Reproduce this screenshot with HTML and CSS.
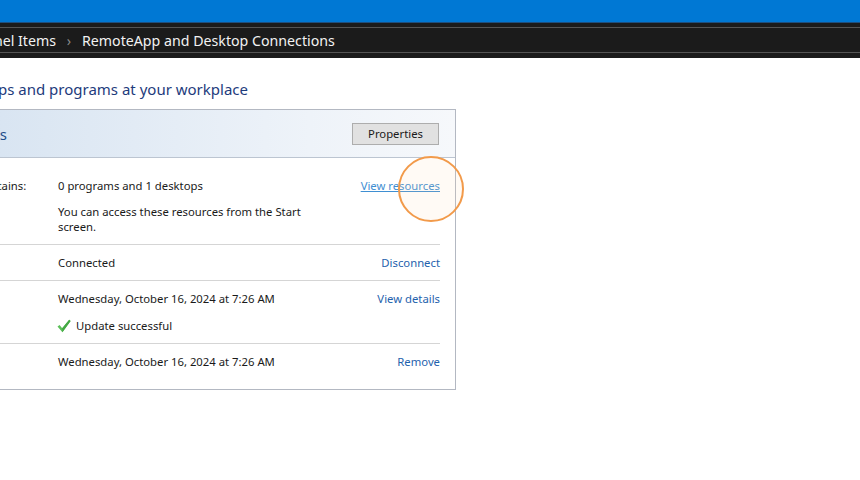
FILE: index.html
```html
<!DOCTYPE html>
<html lang="en">
<head>
    <meta charset="UTF-8">
    <meta name="viewport" content="width=device-width, initial-scale=1.0">
    <title>RemoteApp and Desktop Connections</title>
    <link rel="stylesheet" href="styles.css">
</head>
<body>
    <div class="titlebar"></div>
    <div class="navbar">
        <div class="crumbs">
            <span class="crumb clip"><span>All Control Panel Items</span></span>
            <span class="sep">&#8250;</span>
            <span class="crumb">RemoteApp and Desktop Connections</span>
        </div>
    </div>

    <main class="content">
        <h1 class="heading clip"><span>Access RemoteApp and desktops and programs at your workplace</span></h1>

        <section class="card">
            <div class="card-head">
                <h2 class="card-title clip"><span>Work Resources</span></h2>
                <button class="btn">Properties</button>
            </div>
            <div class="card-body">
                <div class="row">
                    <div class="label">This connection contains:</div>
                    <div class="value">
                        <p>0 programs and 1 desktops</p>
                        <p class="note">You can access these resources from the Start screen.</p>
                    </div>
                    <a class="link hover" href="#">View resources</a>
                </div>
                <div class="row">
                    <div class="label">Status:</div>
                    <div class="value"><p>Connected</p></div>
                    <a class="link" href="#">Disconnect</a>
                </div>
                <div class="row">
                    <div class="label">Most recent update:</div>
                    <div class="value">
                        <p>Wednesday, October 16, 2024 at 7:26 AM</p>
                        <p class="status">
                            <svg class="check" width="14" height="14" viewBox="0 0 14 14">
                                <path d="M0.5 7.6 L2.6 5.9 L5.2 9.2 L12.2 0.8 L13.6 2 L5.4 13.2 Z" fill="#5cc05a"/>
                                <path d="M5.2 9.2 L12.2 0.8 L13.6 2 L5.4 13.2 Z" fill="#44a844"/>
                            </svg>
                            Update successful
                        </p>
                    </div>
                    <a class="link" href="#">View details</a>
                </div>
                <div class="row">
                    <div class="label">Connection created:</div>
                    <div class="value"><p>Wednesday, October 16, 2024 at 7:26 AM</p></div>
                    <a class="link" href="#">Remove</a>
                </div>
            </div>
        </section>
    </main>

    <!-- click highlight from the recording -->
    <div class="ring"></div>
</body>
</html>
```

FILE: styles.css
```css
body {
    margin: 0;
    font-family: "Noto Sans", "Open Sans", sans-serif;
    font-size: 11.3px;
    color: #1a1a1a;
    background: #fff;
    overflow: hidden;
    position: relative;
    height: 480px;
}

/* text whose start is cut off by the window edge */
.clip {
    display: flex;
    justify-content: flex-end;
    overflow: hidden;
    white-space: nowrap;
}

.titlebar {
    height: 22px;
    background: #0078d4;
    border-bottom: 1px solid #1f4f7e;
}
.navbar {
    height: 35px;
    background: #1b1b1b;
    padding-top: 4px;
    box-sizing: border-box;
}
.crumbs {
    display: flex;
    align-items: center;
    height: 24px;
    border-top: 1px solid #555;
    border-bottom: 1px solid #555;
    color: #f2f2f2;
    font-size: 14.2px;
}
.crumb.clip { width: 56px; }
.sep {
    width: 26px;
    text-align: center;
    color: #8a8a8a;
    font-size: 14px;
}

.heading {
    width: 248px;
    margin: 20px 0 9px;
    font-size: 15px;
    font-weight: normal;
    line-height: 22px;
    color: #1e3b7c;
}

.card {
    width: 586px;
    margin-left: -130px;
    box-sizing: border-box;
    border: 1px solid #b3b8c2;
}
.card-head {
    height: 47px;
    display: flex;
    align-items: center;
    justify-content: space-between;
    padding-right: 16px;
    background: linear-gradient(to right, #d6e3f1 15%, #eef3f9 75%, #f6f8fb);
    border-bottom: 1px solid #bcc5d1;
}
.card-title {
    width: 136px;
    margin: 0;
    font-size: 15px;
    font-weight: normal;
    color: #1e4d8a;
}
.btn {
    width: 87px;
    height: 22px;
    font-family: inherit;
    font-size: 11.3px;
    color: #1a1a1a;
    background: #e1e1e1;
    border: 1px solid #adadad;
    padding: 0;
}

.card-body {
    padding: 10px 15px 10px 21px;
}
.row {
    display: grid;
    grid-template-columns: 138px 250px 1fr;
    column-gap: 28px;
    align-items: start;
    padding: 10px 0;
    line-height: 15px;
    border-bottom: 1px solid #d5d5d5;
}
.row:last-child { border-bottom: none; }
.label { white-space: nowrap; }
.value p { margin: 0; }
.value .note { margin-top: 11px; width: 245px; }
.value .status {
    margin-top: 12px;
    display: flex;
    align-items: center;
    gap: 5px;
}
.check { margin-left: -1px; }

.link {
    justify-self: end;
    color: #1f62ad;
    text-decoration: none;
    white-space: nowrap;
}
.link.hover {
    color: #3f8fd2;
    text-decoration: underline;
}

.ring {
    position: absolute;
    left: 398px;
    top: 156px;
    width: 66px;
    height: 66px;
    box-sizing: border-box;
    border: 2.5px solid #f29a4a;
    border-radius: 50%;
    background: rgba(255, 214, 176, 0.12);
}
```
